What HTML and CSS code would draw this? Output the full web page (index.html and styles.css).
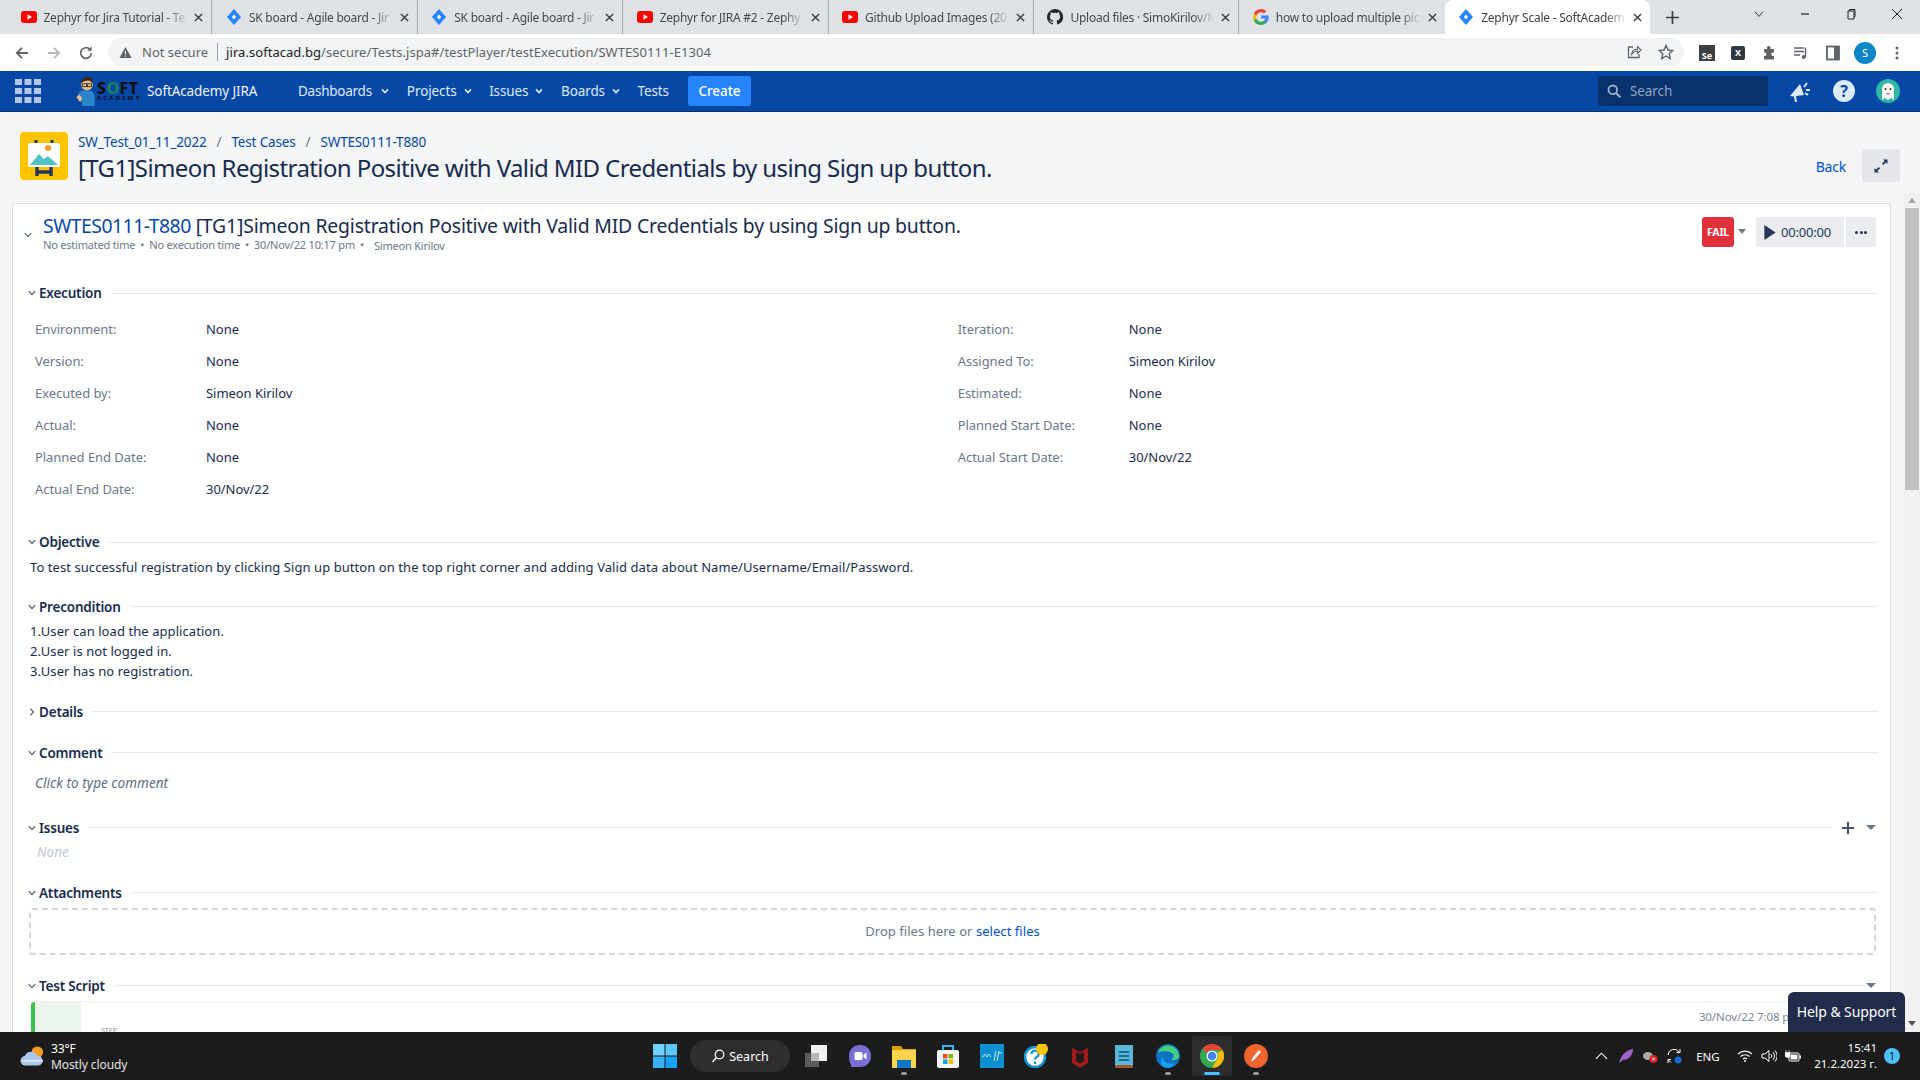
FILE: index.html
```html
<!DOCTYPE html>
<html lang="en">
<head>
<meta charset="utf-8">
<title>Zephyr Scale - SoftAcademy JIRA</title>
<link rel="stylesheet" href="styles.css">
</head>
<body>
<svg class="defs" width="0" height="0" aria-hidden="true">
  <symbol id="yt" viewBox="0 0 16 16"><rect x="0" y="2" width="16" height="12" rx="3" fill="#f00"/><path d="M6.500 5.200v5.600L11 8z" fill="#fff"/></symbol>
  <symbol id="jr" viewBox="0 0 16 16"><path d="M8 0l7 8-7 8-7-8z" fill="#2684ff"/><path d="M8 5.500L10.200 8 8 10.500 5.800 8z" fill="#fff"/></symbol>
  <symbol id="x" viewBox="0 0 10 10"><path d="M1 1l8 8M9 1l-8 8" stroke="#3c4043" stroke-width="1.600" fill="none"/></symbol>
  <symbol id="chd" viewBox="0 0 8 8"><path d="M.8 2.200L4 5.600l3.200-3.400" stroke="#42526e" stroke-width="1.100" fill="none"/></symbol>
  <symbol id="chr" viewBox="0 0 8 8"><path d="M2.200.8L5.600 4 2.200 7.200" stroke="#42526e" stroke-width="1.100" fill="none"/></symbol>
  <symbol id="nav" viewBox="0 0 8 8"><path d="M1 2.400L4 5.600l3-3.200" stroke="#deebff" stroke-width="1.600" fill="none"/></symbol>
</svg>

<div class="tabstrip">
  <div class="tab"><svg class="fav"><use href="#yt"/></svg><span class="tab-title">Zephyr for Jira Tutorial - Te</span><svg class="tab-x"><use href="#x"/></svg></div>
  <div class="tab"><svg class="fav"><use href="#jr"/></svg><span class="tab-title">SK board - Agile board - Jir</span><svg class="tab-x"><use href="#x"/></svg></div>
  <div class="tab"><svg class="fav"><use href="#jr"/></svg><span class="tab-title">SK board - Agile board - Jir</span><svg class="tab-x"><use href="#x"/></svg></div>
  <div class="tab"><svg class="fav"><use href="#yt"/></svg><span class="tab-title">Zephyr for JIRA #2 - Zephy</span><svg class="tab-x"><use href="#x"/></svg></div>
  <div class="tab"><svg class="fav"><use href="#yt"/></svg><span class="tab-title">Github Upload Images (20</span><svg class="tab-x"><use href="#x"/></svg></div>
  <div class="tab"><svg class="fav" viewBox="0 0 16 16"><path fill="#24292f" d="M8 0a8 8 0 0 0-2.500 15.600c.4.100.5-.2.5-.4v-1.400c-2.200.5-2.700-1-2.700-1-.4-.9-.9-1.200-.9-1.200-.7-.5.1-.5.1-.5.8.1 1.200.8 1.200.8.7 1.200 1.900.9 2.300.7.1-.5.3-.9.5-1.100-1.800-.2-3.600-.9-3.600-4 0-.9.3-1.600.8-2.100-.1-.2-.4-1 .1-2.100 0 0 .7-.2 2.200.8a7.600 7.600 0 0 1 4 0c1.500-1 2.200-.8 2.200-.8.4 1.100.2 1.900.1 2.100.5.6.8 1.300.8 2.100 0 3.100-1.900 3.800-3.700 4 .3.3.6.8.6 1.500v2.200c0 .2.100.5.600.4A8 8 0 0 0 8 0z"/></svg><span class="tab-title">Upload files · SimoKirilov/M</span><svg class="tab-x"><use href="#x"/></svg></div>
  <div class="tab"><svg class="fav" viewBox="0 0 16 16"><path d="M15.700 8.200c0-.6-.1-1.100-.2-1.600H8v3h4.300a3.700 3.700 0 0 1-1.600 2.400v2h2.600c1.500-1.400 2.400-3.400 2.400-5.800z" fill="#4285f4"/><path d="M8 16c2.200 0 4-.7 5.300-1.900l-2.600-2c-.7.500-1.600.8-2.700.8-2.100 0-3.900-1.400-4.500-3.300H.9v2.100A8 8 0 0 0 8 16z" fill="#34a853"/><path d="M3.500 9.600a4.800 4.800 0 0 1 0-3.100V4.400H.9a8 8 0 0 0 0 7.200z" fill="#fbbc05"/><path d="M8 3.200c1.200 0 2.200.4 3 1.200l2.300-2.300A8 8 0 0 0 .9 4.400l2.600 2.100C4.100 4.600 5.900 3.200 8 3.200z" fill="#ea4335"/></svg><span class="tab-title">how to upload multiple pic</span><svg class="tab-x"><use href="#x"/></svg></div>
  <div class="tab tab-active"><svg class="fav"><use href="#jr"/></svg><span class="tab-title">Zephyr Scale - SoftAcadem</span><svg class="tab-x"><use href="#x"/></svg></div>
  <svg class="newtab" viewBox="0 0 12 12"><path d="M6 0v12M0 6h12" stroke="#3c4043" stroke-width="1.600"/></svg>
  <div class="winctl">
    <svg class="win" viewBox="0 0 12 12"><path d="M2 3.500l4 5 4-5" stroke="#3c4043" fill="none"/></svg>
    <svg class="win" viewBox="0 0 12 12"><path d="M2 6h8" stroke="#222" stroke-width="1.200"/></svg>
    <svg class="win" viewBox="0 0 12 12"><path d="M3 3h6v8H3zM4.500 3V1.500h5.500v7H9" stroke="#222" fill="none"/></svg>
    <svg class="win" viewBox="0 0 12 12"><path d="M1 1l10 10M11 1L1 11" stroke="#222" fill="none"/></svg>
  </div>
</div>

<div class="toolbar">
  <svg class="tb-nav" viewBox="0 0 16 16"><path d="M14 8H3M8 2.800L2.800 8 8 13.200" stroke="#5f6368" stroke-width="1.800" fill="none"/></svg>
  <svg class="tb-nav" viewBox="0 0 16 16"><path d="M2 8h11M8 2.800L13.200 8 8 13.200" stroke="#b5b8bc" stroke-width="1.800" fill="none"/></svg>
  <svg class="tb-nav" viewBox="0 0 16 16"><path d="M13.300 8.200a5.300 5.300 0 1 1-1.500-3.900" stroke="#5f6368" stroke-width="1.700" fill="none"/><path d="M13.600 1.500v4.300H9.300z" fill="#5f6368"/></svg>
  <div class="omnibox">
    <svg class="warn" viewBox="0 0 14 14"><path d="M7 1l6.500 12H.5z" fill="#5f6368"/><path d="M7 5.200v4M7 10.200v1.300" stroke="#f1f3f4" stroke-width="1.200"/></svg>
    <span class="notsec">Not secure</span>
    <span class="omni-div"></span>
    <span class="url"><b class="url-host">jira.softacad.bg</b>/secure/Tests.jspa#/testPlayer/testExecution/SWTES0111-E1304</span>
    <svg class="omni-ic" viewBox="0 0 16 16"><path d="M7 3H2.500v10.500h10.500V10" stroke="#5f6368" stroke-width="1.300" fill="none"/><path d="M5.500 10.500c.3-3.500 3-5.300 6-5.300V2.500L15 6l-3.500 3.500V7C9 7 7 8.500 5.500 10.500z" stroke="#5f6368" stroke-width="1.100" fill="none"/></svg>
    <svg class="omni-ic" viewBox="0 0 16 16"><path d="M8 1.500l2 4.500 4.800.5-3.600 3.200 1 4.800L8 12l-4.200 2.500 1-4.800L1.200 6.500 6 6z" stroke="#5f6368" stroke-width="1.400" fill="none"/></svg>
  </div>
  <div class="exts">
    <span class="ext-se"><span class="ext-se-t">Se</span></span>
    <span class="ext-x">X</span>
    <svg class="ext" viewBox="0 0 16 16"><path d="M6 2.500a1.800 1.800 0 0 1 3.500 0V4h3.500v3.500h-1.300a1.800 1.800 0 0 0 0 3.500H13v3.500H3v-3.500h1a1.800 1.800 0 0 0 0-3.500H3V4h3z" fill="#5f6368"/></svg>
    <svg class="ext" viewBox="0 0 16 16"><path d="M1 3h10M1 6.500h10M1 10h6" stroke="#5f6368" stroke-width="1.400"/><path d="M12.500 2.500v9.300" stroke="#5f6368" stroke-width="1.400"/><circle cx="10.700" cy="12" r="2" fill="#5f6368"/></svg>
    <svg class="ext" viewBox="0 0 16 16"><rect x="2" y="1.500" width="12" height="13" fill="none" stroke="#5f6368" stroke-width="1.800"/><rect x="9" y="1.500" width="5" height="13" fill="#5f6368"/></svg>
    <span class="ext-avatar">S</span>
    <svg class="ext" viewBox="0 0 16 16"><circle cx="8" cy="3" r="1.500" fill="#5f6368"/><circle cx="8" cy="8" r="1.500" fill="#5f6368"/><circle cx="8" cy="13" r="1.500" fill="#5f6368"/></svg>
  </div>
</div>

<header class="jira-nav">
  <svg class="apps" viewBox="0 0 26 24"><g fill="#b3c6e8"><rect x="0" y="0" width="7" height="6"/><rect x="9.500" y="0" width="7" height="6"/><rect x="19" y="0" width="7" height="6"/><rect x="0" y="9" width="7" height="6"/><rect x="9.500" y="9" width="7" height="6"/><rect x="19" y="9" width="7" height="6"/><rect x="0" y="18" width="7" height="6"/><rect x="9.500" y="18" width="7" height="6"/><rect x="19" y="18" width="7" height="6"/></g></svg>
  <div class="logo">
    <svg class="logo-man" viewBox="0 0 22 32"><path d="M1 22c0-4 3-6 5-7h8c3 1 5 4 5 8v8H6v-5l-3 0z" fill="#2a86c8"/><path d="M0 22l3-3 3 4-2 4z" fill="#e9b98c"/><circle cx="11" cy="9" r="6" fill="#e9b98c"/><path d="M4.500 8C4 2 10 0 14 1c3 1 3.500 4 3 7-1-2-4-4-6-3-2 0-5 1-6.500 3z" fill="#3a2a20"/><rect x="6.500" y="8" width="4" height="3" fill="none" stroke="#222" stroke-width=".8"/><rect x="11.500" y="8" width="4" height="3" fill="none" stroke="#222" stroke-width=".8"/></svg>
    <div class="logo-words"><span class="logo-soft">S<span class="logo-o">O</span>FT</span><span class="logo-acad">ACADEMY</span></div>
  </div>
  <span class="brand">SoftAcademy JIRA</span>
  <nav class="menu">
    <span class="mi">Dashboards<svg class="mi-c"><use href="#nav"/></svg></span>
    <span class="mi">Projects<svg class="mi-c"><use href="#nav"/></svg></span>
    <span class="mi">Issues<svg class="mi-c"><use href="#nav"/></svg></span>
    <span class="mi">Boards<svg class="mi-c"><use href="#nav"/></svg></span>
    <span class="mi">Tests</span>
  </nav>
  <span class="create">Create</span>
  <div class="search"><svg class="search-ic" viewBox="0 0 14 14"><circle cx="5.800" cy="5.800" r="4.300" fill="none" stroke="#9fb2cf" stroke-width="1.800"/><path d="M9 9l4.300 4.300" stroke="#9fb2cf" stroke-width="2"/></svg><span>Search</span></div>
  <svg class="nav-ic" viewBox="0 0 24 24"><path d="M2 17L12 5l4 11-8 1 1 6H7l-1-5.500z" fill="#deebff"/><path d="M16 8l3-4M18 11h4M17 14l3 2" stroke="#deebff" stroke-width="2"/></svg>
  <span class="help">?</span>
  <svg class="avatar" viewBox="0 0 24 24"><circle cx="12" cy="12" r="12" fill="#2eb6a6"/><path d="M6 21V10a6 6 0 0 1 12 0v11l-3-2-3 2-3-2z" fill="#fff"/><circle cx="9.500" cy="10" r="1" fill="#222"/><circle cx="14.500" cy="10" r="1" fill="#222"/><path d="M10 14h4l-2 2z" fill="#e5484d"/></svg>
</header>

<main class="page">
  <div class="page-head">
    <svg class="proj-ic" viewBox="0 0 48 48"><rect width="48" height="48" rx="4" fill="#ffc400"/><path d="M16 8v6M32 8v6" stroke="#253858" stroke-width="3"/><rect x="8" y="11" width="32" height="24" rx="2" fill="#fff"/><path d="M10 33l9-11 5 5 4-3 10 9z" fill="#4fc4c4"/><circle cx="28" cy="16" r="3" fill="#ff991f"/><path d="M17 35v9M31 35v9M17 40h14" stroke="#253858" stroke-width="3.500" fill="none"/></svg>
    <div class="head-text">
      <div class="crumbs"><a class="lnk">SW_Test_01_11_2022</a><span class="sl">/</span><a class="lnk">Test Cases</a><span class="sl">/</span><a class="lnk">SWTES0111-T880</a></div>
      <h1 class="title">[TG1]Simeon Registration Positive with Valid MID Credentials by using Sign up button.</h1>
    </div>
    <a class="back">Back</a>
    <span class="expand"><svg class="expand-ic" viewBox="0 0 16 16"><path d="M10 1.500h4.500V6l-1.600-1.600-2.700 2.700-1.300-1.300 2.700-2.700zM6 14.500H1.500V10l1.600 1.600 2.700-2.700 1.300 1.300-2.700 2.700z" fill="#253858"/></svg></span>
  </div>

  <div class="body-row">
    <div class="card">
      <div class="card-head">
        <svg class="chev chev-top"><use href="#chd"/></svg>
        <div class="card-titles">
          <div class="card-title"><a class="key">SWTES0111-T880</a> [TG1]Simeon Registration Positive with Valid MID Credentials by using Sign up button.</div>
          <div class="meta"><span>No estimated time</span><i class="dot">•</i><span>No execution time</span><i class="dot">•</i><span>30/Nov/22 10:17 pm</span><i class="dot">•</i><span class="meta-user">Simeon Kirilov</span></div>
        </div>
        <div class="actions">
          <span class="fail">FAIL</span><span class="caret caret-fail"></span>
          <span class="timer"><svg class="play" viewBox="0 0 12 16"><path d="M0 0l12 8-12 8z" fill="#253858"/></svg>00:00:00</span>
          <span class="more"><i></i><i></i><i></i></span>
        </div>
      </div>

      <section class="sec sec-exec">
        <div class="sec-h"><svg class="chev"><use href="#chd"/></svg><h2>Execution</h2><span class="rule"></span></div>
        <div class="fields">
          <div class="col">
            <div class="f"><span class="k">Environment:</span><span class="v">None</span></div>
            <div class="f"><span class="k">Version:</span><span class="v">None</span></div>
            <div class="f"><span class="k">Executed by:</span><span class="v">Simeon Kirilov</span></div>
            <div class="f"><span class="k">Actual:</span><span class="v">None</span></div>
            <div class="f"><span class="k">Planned End Date:</span><span class="v">None</span></div>
            <div class="f"><span class="k">Actual End Date:</span><span class="v">30/Nov/22</span></div>
          </div>
          <div class="col">
            <div class="f"><span class="k">Iteration:</span><span class="v">None</span></div>
            <div class="f"><span class="k">Assigned To:</span><span class="v">Simeon Kirilov</span></div>
            <div class="f"><span class="k">Estimated:</span><span class="v">None</span></div>
            <div class="f"><span class="k">Planned Start Date:</span><span class="v">None</span></div>
            <div class="f"><span class="k">Actual Start Date:</span><span class="v">30/Nov/22</span></div>
          </div>
        </div>
      </section>

      <section class="sec sec-obj">
        <div class="sec-h"><svg class="chev"><use href="#chd"/></svg><h2>Objective</h2><span class="rule"></span></div>
        <p class="txt">To test successful registration by clicking Sign up button on the top right corner and adding Valid data about Name/Username/Email/Password.</p>
      </section>

      <section class="sec sec-pre">
        <div class="sec-h"><svg class="chev"><use href="#chd"/></svg><h2>Precondition</h2><span class="rule"></span></div>
        <p class="txt lines">1.User can load the application.<br>2.User is not logged in.<br>3.User has no registration.</p>
      </section>

      <section class="sec sec-det">
        <div class="sec-h"><svg class="chev"><use href="#chr"/></svg><h2>Details</h2><span class="rule"></span></div>
      </section>

      <section class="sec sec-com">
        <div class="sec-h"><svg class="chev"><use href="#chd"/></svg><h2>Comment</h2><span class="rule"></span></div>
        <p class="comment">Click to type comment</p>
      </section>

      <section class="sec sec-iss">
        <div class="sec-h"><svg class="chev"><use href="#chd"/></svg><h2>Issues</h2><span class="rule"></span><svg class="plus" viewBox="0 0 12 12"><path d="M6 0v12M0 6h12" stroke="#42526e" stroke-width="2"/></svg><span class="caret"></span></div>
        <p class="none">None</p>
      </section>

      <section class="sec sec-att">
        <div class="sec-h"><svg class="chev"><use href="#chd"/></svg><h2>Attachments</h2><span class="rule"></span></div>
        <div class="drop">Drop files here or&nbsp;<a class="sel">select files</a></div>
      </section>

      <section class="sec sec-scr">
        <div class="sec-h"><svg class="chev"><use href="#chd"/></svg><h2>Test Script</h2><span class="rule"></span><span class="caret"></span></div>
        <div class="step">
          <div class="step-bar"></div>
          <span class="step-label">STEP</span>
          <span class="step-date">30/Nov/22 7:08 pm</span>
        </div>
      </section>
    </div>
    <div class="scrollbar"><span class="sb-up"></span><span class="sb-thumb"></span><span class="sb-down"></span></div>
    <div class="support">Help &amp; Support</div>
  </div>
</main>

<footer class="taskbar">
  <div class="weather">
    <svg class="w-ic" viewBox="0 0 26 24"><circle cx="18" cy="8" r="6" fill="#f59a23"/><path d="M6 22a5 5 0 0 1-1-10 7 7 0 0 1 13 0 5 5 0 0 1 1 10z" fill="#a9c6ee"/><path d="M2 17h22" stroke="#e6eefb" stroke-width="1.500"/></svg>
    <div class="w-text"><span class="w-t">33°F</span><span class="w-d">Mostly cloudy</span></div>
  </div>
  <div class="tb-center">
    <svg class="tk" viewBox="0 0 24 24"><rect width="11.500" height="11.500" fill="#6fd3fb"/><rect x="12.500" width="11.500" height="11.500" fill="#5cc7fa"/><rect y="12.500" width="11.500" height="11.500" fill="#38b2f5"/><rect x="12.500" y="12.500" width="11.500" height="11.500" fill="#18a0f5"/></svg>
    <div class="tk-search"><svg class="tk-s-ic" viewBox="0 0 14 14"><circle cx="8.500" cy="5.500" r="4.300" fill="none" stroke="#fff" stroke-width="1.200"/><path d="M5.500 8.500L1.500 13" stroke="#fff" stroke-width="1.400"/></svg>Search</div>
    <svg class="tk" viewBox="0 0 24 24"><rect x="1" y="9" width="14" height="14" fill="#5c5c5c"/><rect x="7" y="1" width="16" height="16" fill="#f0f0f0"/><rect x="7" y="9" width="8" height="8" fill="#b8b8b8"/></svg>
    <svg class="tk" viewBox="0 0 24 24"><path d="M12 1c6.500 0 11 4.500 11 11s-4.500 11-11 11H3v-2C1.500 18 1 15 1 12 1 5.500 5.500 1 12 1z" fill="#7b6fd6"/><rect x="6.500" y="8" width="8" height="8" rx="1.500" fill="#fff"/><path d="M15.500 11l3-2.500v7l-3-2.500z" fill="#fff"/></svg>
    <span class="tk-wrap tk-run"><svg class="tk" viewBox="0 0 24 24"><path d="M0 2h9l2 3h13v19H0z" fill="#d9a000"/><rect y="6" width="24" height="18" fill="#fbd54e"/><rect x="5" y="16" width="14" height="8" fill="#0a78c8"/></svg></span>
    <svg class="tk" viewBox="0 0 24 24"><path d="M7 6V2h10v4" fill="none" stroke="#38b2f5" stroke-width="2"/><rect x="1" y="6" width="22" height="18" rx="2" fill="#f4f4f4"/><rect x="7" y="10" width="4.500" height="4.500" fill="#f25022"/><rect x="12.500" y="10" width="4.500" height="4.500" fill="#7fba00"/><rect x="7" y="15.500" width="4.500" height="4.500" fill="#00a4ef"/><rect x="12.500" y="15.500" width="4.500" height="4.500" fill="#ffb900"/></svg>
    <svg class="tk" viewBox="0 0 24 24"><rect width="24" height="24" fill="#0a8fd0"/><path d="M2 13c2 0 2-3 3-3s1 3 2 3 1-3 2-3 1 3 2 3M14 17l2-10M17 17l2-10M19 9h3" stroke="#cdeaf8" stroke-width="1" fill="none"/></svg>
    <svg class="tk" viewBox="0 0 24 24"><circle cx="11" cy="13" r="10" fill="#fff" stroke="#1193d4" stroke-width="2.500"/><path d="M7.500 10a3.500 3.500 0 1 1 5 3.300c-1 .6-1.500 1-1.500 2.200M11 17.500v2.500" stroke="#1193d4" stroke-width="2.200" fill="none"/><circle cx="18" cy="5" r="6" fill="#ffc400"/></svg>
    <svg class="tk" viewBox="0 0 24 24"><path d="M4 4l8 4 8-4v15l-8 5-8-5z" fill="#a11b1b"/><path d="M8 8l4 2 4-2v9l-4 2.500L8 17z" fill="#1c1c1c"/></svg>
    <svg class="tk" viewBox="0 0 24 24"><rect x="3" y="1" width="18" height="23" fill="#5bb7d9"/><path d="M3 21h18v3H3z" fill="#a05a2c"/><path d="M7 8h10M7 12h10M7 16h10" stroke="#1d6d93" stroke-width="2"/></svg>
    <span class="tk-wrap tk-run"><svg class="tk" viewBox="0 0 24 24"><circle cx="12" cy="12" r="12" fill="#0c72c4"/><path d="M2 8a11 11 0 0 1 21 4c0 4-6 5-8 3 4 0 4-5-1-7-5-1.500-9 0-12 0z" fill="#45d07f"/><path d="M12 24C6 24 2 18 7 12c-1 6 6 9 12 7-2 3-4 5-7 5z" fill="#1aa0e8"/></svg></span>
    <span class="tk-wrap tk-active"><svg class="tk" viewBox="0 0 24 24"><circle cx="12" cy="12" r="12" fill="#34a853"/><path d="M12 0a12 12 0 0 1 10.400 6H12a6 6 0 0 0-5.200 3L2.600 4.700A12 12 0 0 1 12 0z" fill="#ea4335"/><path d="M22.400 6A12 12 0 0 1 12 24l5.200-9A6 6 0 0 0 17.200 9z" fill="#fbbc05"/><circle cx="12" cy="12" r="5.500" fill="#fff"/><circle cx="12" cy="12" r="4.300" fill="#4285f4"/></svg></span>
    <span class="tk-wrap tk-run"><svg class="tk" viewBox="0 0 24 24"><ellipse cx="12" cy="12" rx="12" ry="12" fill="#f0642d"/><path d="M7 18l2-5 6-7 2 2-6 7z" fill="#fff"/></svg></span>
  </div>
  <div class="tray">
    <svg class="tr tr-up" viewBox="0 0 14 8"><path d="M1 7l6-6 6 6" stroke="#fff" stroke-width="1.100" fill="none"/></svg>
    <svg class="tr" viewBox="0 0 16 16"><path d="M1 15C3 7 8 2 15 1c0 6-4 11-10 11z" fill="#9e62c9"/></svg>
    <svg class="tr" viewBox="0 0 16 16"><ellipse cx="6" cy="8" rx="5" ry="4" fill="#aaa"/><circle cx="11.500" cy="11" r="4" fill="#d81f26"/><path d="M10 9.500l3 3M13 9.500l-3 3" stroke="#fff"/></svg>
    <svg class="tr" viewBox="0 0 16 16"><path d="M2 7a6 6 0 0 1 11-3M14 1v3.500h-3.500M2 15v-3.500h3M2 11.500l3 3" stroke="#fff" fill="none"/><circle cx="12" cy="12" r="3.500" fill="#0f6cd8"/></svg>
    <span class="eng">ENG</span>
    <svg class="tr tr-wifi" viewBox="0 0 16 14"><path d="M1 5a10 10 0 0 1 14 0M3.500 7.500a6.500 6.500 0 0 1 9 0M6 10a3 3 0 0 1 4 0" stroke="#fff" stroke-width="1.100" fill="none"/><circle cx="8" cy="12" r="1" fill="#fff"/></svg>
    <svg class="tr" viewBox="0 0 16 14"><path d="M1 5h3l4-3.500v11L4 9H1z" stroke="#fff" fill="none"/><path d="M10 5a3 3 0 0 1 0 4M12 3a6 6 0 0 1 0 8M14 1.500a8 8 0 0 1 0 11" stroke="#fff" fill="none"/></svg>
    <svg class="tr" viewBox="0 0 16 14"><path d="M1 1v2.500M4 1v2.500M0 3.500h5V6a2.500 2.500 0 0 1-5 0z" fill="#fff" stroke="#fff" stroke-width=".6"/><rect x="4" y="4" width="10" height="8" rx="1" fill="none" stroke="#fff"/><rect x="5.500" y="5.500" width="7" height="5" fill="#fff"/><rect x="14.500" y="6.500" width="1.500" height="3" fill="#fff"/></svg>
    <div class="clock"><span>15:41</span><span>21.2.2023 г.</span></div>
    <span class="notif">1</span>
  </div>
</footer>
</body>
</html>
```

FILE: styles.css
```css
* { box-sizing: border-box; }
html, body { margin: 0; height: 100%; }
body {
  width: 1920px; height: 1080px; overflow: hidden;
  display: flex; flex-direction: column;
  font-family: "Noto Sans", "Open Sans", sans-serif;
  background: #f4f5f7; color: #172b4d;
}
.defs { position: absolute; }
h1, h2, p { margin: 0; }
i { font-style: normal; }

/* browser tabs */
.tabstrip { height: 34px; background: #dee1e6; display: flex; align-items: stretch; padding-left: 7px; flex: none; }
.tab { width: 205.400px; display: flex; align-items: center; padding: 0 8px 0 13.500px; font-size: 12px; letter-spacing: -.25px; color: #45494e; border-right: 1px solid #a5a8ad; position: relative; }
.tab:nth-child(7) { border-right: 0; }
.tab-active { background: #fff; border: 0; border-radius: 8px 8px 0 0; color: #3c4043; }
.fav { width: 16px; height: 16px; flex: none; margin-right: 7px; }
.tab-title { flex: 1; min-width: 0; white-space: nowrap; -webkit-mask-image: linear-gradient(90deg, #000 85%, transparent); mask-image: linear-gradient(90deg, #000 85%, transparent); }
.tab-x { width: 9px; height: 9px; flex: none; margin-left: 6px; }
.newtab { width: 13px; height: 13px; margin: 11px 0 0 16px; }
.winctl { margin-left: auto; display: flex; padding-right: 17px; gap: 34px; }
.win { width: 12px; height: 12px; margin-top: 8px; }

/* address bar */
.toolbar { height: 37px; background: #fff; display: flex; align-items: center; padding: 0 14px; flex: none; }
.tb-nav { width: 16px; height: 16px; margin-right: 16px; flex: none; }
.omnibox { margin-left: -2px; margin-top: -1px; width: 1576px; height: 28px; background: #f1f3f4; border-radius: 14px; display: flex; align-items: center; padding: 0 10px 0 11px; font-size: 13px; color: #5f6368; }
.warn { width: 13px; height: 13px; margin-right: 10px; }
.omni-div { width: 1px; height: 18px; background: #9aa0a6; margin: 0 8px 0 9px; }
.url { flex: 1; white-space: nowrap; letter-spacing: .05px; }
.url-host { font-weight: 400; color: #202124; }
.omni-ic { width: 16px; height: 16px; margin-left: 16px; }
.exts { display: flex; align-items: center; gap: 16px; margin-left: 15px; }
.ext { width: 16px; height: 16px; flex: none; }
.ext-se { width: 16px; height: 16px; background: #3c4043; color: #fff; font-size: 9px; font-weight: 700; display: flex; align-items: flex-end; justify-content: center; line-height: 11px; }
.ext-x { width: 14px; height: 14px; background: #2e3a40; border-radius: 2px; color: #fff; font-size: 9px; font-weight: 700; text-align: center; line-height: 14px; }
.ext-avatar { width: 22px; height: 22px; border-radius: 50%; background: #0b87c9; color: #fff; font-size: 11px; text-align: center; line-height: 22px; margin: 0 -3px; }

/* jira nav */
.jira-nav { height: 41px; background: #0747a6; display: flex; align-items: center; padding: 0 20px 0 15px; color: #deebff; font-size: 13.500px; flex: none; border-bottom: 1px solid #06306f; letter-spacing: -.1px; }
.apps { width: 26px; height: 24px; flex: none; }
.logo { display: flex; align-items: center; margin-left: 35px; width: 71px; }
.logo-man { width: 22px; height: 31px; flex: none; }
.logo-words { display: flex; flex-direction: column; color: #0b0f14; line-height: 1; margin-left: -1px; }
.logo-soft { font-weight: 800; font-size: 16px; letter-spacing: .4px; line-height: 13px; }
.logo-o { color: #1d7f5c; }
.logo-acad { font-size: 6px; letter-spacing: 2.200px; font-weight: 700; }
.brand { margin-left: 0; width: 151px; white-space: nowrap; color: #f0f4fb; }
.menu { display: flex; gap: 17.500px; }
.mi { display: flex; align-items: center; white-space: nowrap; }
.mi:first-child { letter-spacing: -.25px; }
.mi:first-child .mi-c { margin-left: 9.500px; }
.mi-c { width: 8px; height: 8px; margin-left: 7px; }
.create { margin-left: 19px; width: 63px; height: 30px; background: #2684ff; border-radius: 3px; color: #fff; font-weight: 500; text-align: center; line-height: 30px; }
.search { margin-left: auto; width: 170px; height: 30px; background: #09326c; border-radius: 3px; display: flex; align-items: center; padding-left: 9px; color: #8fa3c2; }
.search-ic { width: 14px; height: 14px; margin-right: 9px; }
.nav-ic { width: 24px; height: 24px; margin-left: 20px; }
.help { width: 22px; height: 22px; border-radius: 50%; background: #deebff; color: #0747a6; font-weight: 700; font-size: 16px; text-align: center; line-height: 22px; margin-left: 21px; }
.avatar { width: 24px; height: 24px; margin-left: 21px; }

/* page */
.page { flex: 1; display: flex; flex-direction: column; min-height: 0; }
.page-head { height: 80px; flex: none; display: flex; padding: 20px 20px 0 20px; }
.proj-ic { width: 48px; height: 48px; flex: none; }
.head-text { margin-left: 10px; flex: 1; }
.crumbs { display: flex; align-items: center; font-size: 13.500px; height: 20px; letter-spacing: -.15px; }
.lnk { color: #0747a6; }
.sl { color: #6b778c; margin: 0 10px; }
.title { font-size: 24px; font-weight: 400; line-height: 32px; letter-spacing: -.6px; color: #172b4d; white-space: nowrap; }
.back { color: #0052cc; font-size: 14px; margin-top: 25px; letter-spacing: -.2px; }
.expand { width: 38px; height: 33px; background: #e4e6eb; border-radius: 3px; margin: 17px 0 0 16px; display: flex; align-items: center; justify-content: center; }
.expand-ic { width: 16px; height: 16px; }

.body-row { flex: 1; display: flex; min-height: 0; padding: 11px 0 0 12px; position: relative; overflow: hidden; }
.card { width: 1879px; flex: none; background: #fff; border: 1px solid #ddd; border-bottom: 0; border-radius: 3px 3px 0 0; padding: 0 12px 0 18px; }
.scrollbar { position: absolute; right: 0; top: 0; bottom: 0; width: 16px; background: #f1f1f1; display: flex; flex-direction: column; align-items: center; }
.sb-up { width: 0; height: 0; border: 4px solid transparent; border-top: 0; border-bottom: 5px solid #a3a3a3; margin-top: 6px; }
.sb-thumb { width: 14px; height: 282px; background: #c1c1c1; margin-top: 5px; }
.sb-down { width: 0; height: 0; border: 4px solid transparent; border-bottom: 0; border-top: 5px solid #505050; margin-top: auto; margin-bottom: 6px; }
.support { position: absolute; right: 15px; bottom: 0; width: 117px; height: 40px; background: #212c4b; color: #fff; border-radius: 6px 6px 0 0; font-size: 14px; line-height: 40px; text-align: center; letter-spacing: -.1px; }

.card-head { display: flex; height: 45px; padding-top: 8px; }
.chev { width: 8px; height: 8px; flex: none; }
.chev-top { margin: 19px 5px 0 -7px; }
.card-titles { flex: 1; min-width: 0; }
.card-title { font-size: 19.400px; line-height: 27px; letter-spacing: -.17px; white-space: nowrap; margin-left: 6px; }
.key { color: #0747a6; letter-spacing: -.5px; }
.meta { font-size: 11px; color: #6b778c; line-height: 12px; margin-left: 6px; display: flex; letter-spacing: -.2px; }
.dot { margin: 0 5px; }
.meta-user { margin-left: 5px; margin-top: 1px; }
.actions { display: flex; align-items: flex-start; padding-top: 5px; margin-right: 2px; }
.fail { width: 32px; height: 30px; background: #e0303a; border-radius: 3px; color: #fff; font-weight: 700; font-size: 10.500px; text-align: center; line-height: 30px; letter-spacing: -.2px; }
.caret { width: 0; height: 0; border: 5px solid transparent; border-bottom: 0; border-top: 5px solid #6b778c; flex: none; }
.caret-fail { margin: 12px 10px 0 4px; border-width: 4px; border-bottom: 0; border-top-width: 5px; }
.timer { width: 88px; height: 30px; background: #ebecf0; border-radius: 3px 0 0 3px; display: flex; align-items: center; padding-left: 8px; font-size: 13px; letter-spacing: -.2px; color: #253858; }
.play { width: 12px; height: 15px; margin-right: 5px; }
.more { width: 30px; height: 30px; margin-left: 2px; background: #ebecf0; border-radius: 0 3px 3px 0; display: flex; align-items: center; justify-content: center; gap: 1.500px; }
.more i { width: 3px; height: 3px; background: #253858; border-radius: 50%; }

.sec-h { display: flex; align-items: center; height: 20px; margin-left: -3px; }
.sec-h h2 { font-size: 13.500px; font-weight: 600; color: #172b4d; margin: 0 9px 0 3px; white-space: nowrap; letter-spacing: -.2px; }
.rule { flex: 1; height: 1px; background: #e6e6e6; }
.sec-exec { margin-top: 34px; }
.fields { display: flex; padding: 10px 0 0 4px; }
.col { width: 925px; display: flex; flex-direction: column; }
.col:last-child { margin-left: 2.500px; }
.f { height: 32px; display: flex; align-items: center; font-size: 13px; letter-spacing: -.05px; }
.k { width: 171px; color: #6b778c; flex: none; }
.v { color: #172b4d; }
.sec-obj { margin-top: 27px; }
.txt { font-size: 13px; letter-spacing: .07px; color: #172b4d; line-height: 20px; margin: 4.500px 0 0 -1px; white-space: nowrap; }
.sec-pre { margin-top: 20px; }
.sec-det { margin-top: 20.500px; }
.sec-com { margin-top: 21px; }
.comment { font-style: italic; color: #5e6c84; font-size: 13.500px; margin: 10px 0 0 4px; line-height: 20px; letter-spacing: .05px; }
.sec-iss { margin-top: 25px; }
.plus { width: 12px; height: 12px; margin: 0 12px 0 11px; }
.sec-iss .caret, .sec-scr .caret { margin-right: 2px; }
.none { font-style: italic; color: #c1c7d0; font-size: 13.500px; margin: 4px 0 0 6px; line-height: 20px; }
.sec-att { margin-top: 21px; }
.drop { height: 47px; margin: 5px 2px 0 -2px; border: 2px dashed #d5d5d5; border-radius: 3px; display: flex; align-items: center; justify-content: center; font-size: 13px; color: #6b778c; letter-spacing: .05px; }
.sel { color: #0052cc; }
.sec-scr { margin-top: 21px; }
.step { height: 40px; margin: 5px 0 0 0; border-top: 1px solid #f0f0f0; display: flex; position: relative; }
.step-bar { width: 50px; height: 40px; background: #ebf5ec; border-left: 4px solid #3fbf4f; border-radius: 3px 0 0 0; }
.step-label { font-size: 7px; color: #8993a4; margin: 24px 0 0 20px; }
.step-date { position: absolute; top: 7px; right: 78px; font-size: 11.500px; color: #7a869a; white-space: nowrap; letter-spacing: -.1px; }

/* taskbar */
.taskbar { height: 48px; background: #1c1c1c; color: #fff; display: flex; align-items: center; flex: none; position: relative; }
.weather { width: 653px; flex: none; display: flex; align-items: center; padding-left: 20px; }
.w-ic { width: 25px; height: 24px; }
.w-text { display: flex; flex-direction: column; margin: 1px 0 0 6px; font-size: 12px; line-height: 16px; letter-spacing: -.1px; }
.w-d { color: #e4e4e4; }
.tb-center { display: flex; align-items: center; gap: 20px; height: 48px; }
.tk { width: 24px; height: 24px; flex: none; display: block; }
.tk-search { width: 100px; height: 32px; border-radius: 16px; background: #2e2e2e; display: flex; align-items: center; justify-content: center; font-size: 12.500px; margin: 0 -6px 0 -7px; }
.tk-s-ic { width: 14px; height: 14px; margin-right: 4px; }
.tk-wrap { position: relative; width: 24px; height: 40px; display: flex; align-items: center; justify-content: center; }
.tk-run::after { content: ""; position: absolute; bottom: 1px; width: 6px; height: 3px; border-radius: 2px; background: #9a9a9a; }
.tk-active { background: #2d2d2d; box-shadow: 8px 0 #2d2d2d, -8px 0 #2d2d2d; border-radius: 2px; }
.tk-active::after { content: ""; position: absolute; bottom: 1px; width: 16px; height: 3px; border-radius: 2px; background: #4cc2ff; }
.tray { margin-left: auto; display: flex; align-items: center; padding-right: 20px; }
.tr { width: 16px; height: 16px; margin-right: 8px; flex: none; }
.tr-up { width: 13px; height: 8px; margin-right: 10px; }
.eng { font-size: 11.500px; margin: 0 17px 0 6.500px; }
.clock { display: flex; flex-direction: column; align-items: flex-end; font-size: 11.500px; line-height: 16px; margin: 0 7px 0 5.500px; }
.notif { width: 16px; height: 16px; border-radius: 50%; background: #4cc2ff; color: #111; font-size: 10.500px; text-align: center; line-height: 16px; }
```
